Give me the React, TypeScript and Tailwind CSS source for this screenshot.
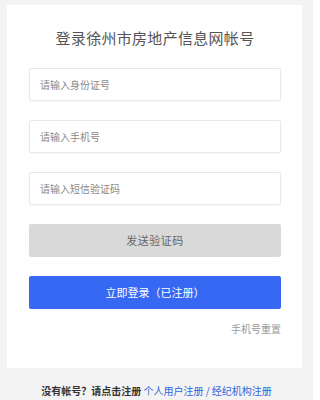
import { useState } from 'react';

const fields = [
    { id: 'idcard', placeholder: '请输入身份证号' },
    { id: 'phone', placeholder: '请输入手机号' },
    { id: 'code', placeholder: '请输入短信验证码' },
];

const App = () => {
    const [values, setValues] = useState<Record<string, string>>({});

    return (
        <div
            className="min-h-[400px] w-[313px] bg-[#f3f3f3] pt-[5px] overflow-hidden"
            style={{ fontFamily: '"Noto Sans CJK SC", "Noto Sans", sans-serif' }}
        >
            {/* Login card */}
            <div className="ml-[7px] mr-[11px] h-[363px] bg-white pl-[22px] pr-[21px] pt-[22px] flex flex-col">
                <h1 className="text-center text-[15px] leading-[22px] text-[#555] tracking-[0.3px]">
                    登录徐州市房地产信息网帐号
                </h1>

                <div className="mt-[19px] flex flex-col gap-[19px]">
                    {fields.map((field) => (
                        <input
                            key={field.id}
                            type="text"
                            placeholder={field.placeholder}
                            value={values[field.id] ?? ''}
                            onChange={(e) => setValues({ ...values, [field.id]: e.target.value })}
                            className="h-[33px] w-full rounded-[2px] border border-[#e8e8e8] bg-white px-[10px] text-[10px] text-[#333] placeholder-[#8a8a8a] outline-none shadow-[0_1px_2px_rgba(0,0,0,0.04)]"
                        />
                    ))}

                    <button className="h-[33px] w-full rounded-[2px] bg-[#d9d9d9] text-[11px] tracking-[0.5px] text-[#666]">
                        发送验证码
                    </button>

                    <button className="h-[33px] w-full rounded-[2px] bg-[#3668f4] text-[11px] text-white">
                        立即登录（已注册）
                    </button>
                </div>

                <div className="mt-[13px] text-right text-[10px] leading-[14px] text-[#999]">
                    手机号重置
                </div>
            </div>

            {/* Footer */}
            <div className="pt-[16px] text-center text-[10px] leading-[14px]">
                <span className="font-bold text-[#333]">没有帐号？请点击注册</span>{' '}
                <a className="text-[#2f66e0]">个人用户注册</a>
                <span className="text-[#2f66e0]"> / </span>
                <a className="text-[#2f66e0]">经纪机构注册</a>
            </div>
        </div>
    );
};

export default App;
